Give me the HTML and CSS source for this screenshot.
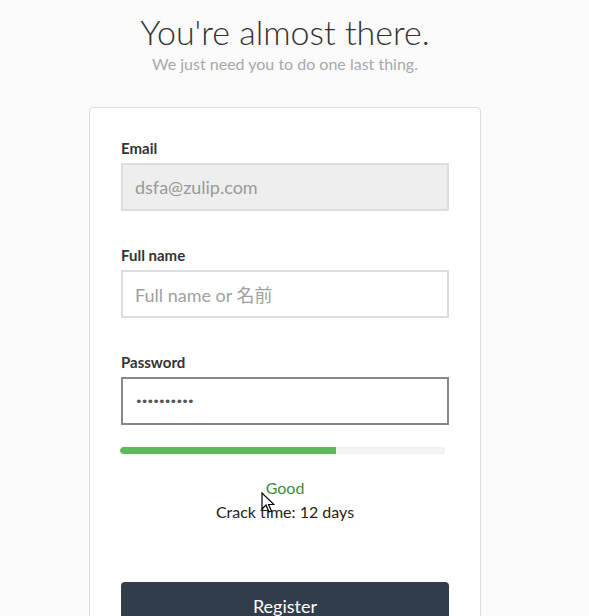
FILE: index.html
```html
<!DOCTYPE html>
<html lang="en">
<head>
<meta charset="utf-8">
<title>Register</title>
<link rel="stylesheet" href="styles.css">
</head>
<body>
<div class="page">
  <header class="intro">
    <h1 class="title">You're almost there.</h1>
    <p class="subtitle">We just need you to do one last thing.</p>
  </header>
  <form class="card">
    <div class="field">
      <label class="label">Email</label>
      <div class="input input-disabled">dsfa@zulip.com</div>
    </div>
    <div class="field">
      <label class="label">Full name</label>
      <div class="input input-placeholder">Full name or 名前</div>
    </div>
    <div class="field">
      <label class="label">Password</label>
      <div class="input input-focus"><span class="dots">••••••••••</span></div>
    </div>
    <div class="meter"><div class="meter-fill" style="width:66.5%"></div></div>
    <div class="strength">
      <div class="strength-word">Good</div>
      <div class="crack">Crack time: 12 days</div>
      <svg class="cursor" width="14" height="22" viewBox="0 0 14 22"><path d="M1 1 L1 17 L5 13 L8 20 L10.5 19 L7.5 12.5 L13 12.5 Z" fill="#fff" stroke="#000" stroke-width="1.2" stroke-linejoin="miter"/></svg>
    </div>
    <button type="button" class="btn">Register</button>
  </form>
</div>
</body>
</html>
```
FILE: styles.css
```css
html, body {
  margin: 0;
  padding: 0;
}
body {
  background-color: #fbfbfb;
  background-image: radial-gradient(rgba(0,0,0,0.012) 1px, transparent 1px);
  background-size: 3px 3px;
  font-family: "Source Sans Pro", Lato, "Noto Sans", sans-serif;
  color: #333;
  height: 616px;
  overflow: hidden;
}
.page {
  width: 392px;
  margin-left: 89px;
  display: flex;
  flex-direction: column;
}
.intro {
  text-align: center;
  padding-top: 10px;
}
.title {
  margin: 0;
  font-weight: 300;
  font-size: 34px;
  line-height: 44px;
  color: #333;
}
.subtitle {
  margin: 0;
  font-size: 16px;
  line-height: 20px;
  color: #a8a8a8;
}
.card {
  margin-top: 33px;
  background: #fff;
  border: 1px solid #ddd;
  border-radius: 4px;
  padding: 30px 31px 0 31px;
  display: flex;
  flex-direction: column;
  height: 520px;
  box-sizing: border-box;
}
.field {
  display: flex;
  flex-direction: column;
  margin-bottom: 34px;
}
.label {
  font-weight: 700;
  font-size: 15px;
  line-height: 20px;
  color: #333;
  margin-bottom: 5px;
}
.input {
  box-sizing: border-box;
  height: 48px;
  border: 2px solid #ddd;
  padding: 0 12px;
  display: flex;
  align-items: center;
  font-size: 18px;
  color: #999;
  background: #fff;
}
.input-disabled {
  background: #eee;
}
.input-placeholder {
  color: #a0a0a0;
  font-family: "Source Sans Pro", Lato, "Noto Sans CJK JP", sans-serif;
}
.input-focus {
  border-color: #888;
  color: #555;
}
.dots {
  font-family: "DejaVu Sans", sans-serif;
  font-size: 13px;
  letter-spacing: -1.9px;
  color: #555;
}
.meter {
  margin-top: -12px;
  width: 325px;
  margin-left: -1px;
  height: 8px;
  border-radius: 4px;
  background: #f4f4f4;
  box-shadow: inset 0 0 0 1px #eee;
  overflow: hidden;
}
.meter-fill {
  height: 100%;
  background: #5cb85c;
  border-radius: 4px 0 0 4px;
}
.strength {
  position: relative;
  text-align: center;
  margin-top: 22px;
  font-size: 16px;
  line-height: 24px;
}
.strength-word {
  color: #3d8b3d;
}
.crack {
  color: #222;
}
.cursor {
  position: absolute;
  left: 140px;
  top: 16px;
}
.btn {
  margin-top: 58px;
  height: 48px;
  border: none;
  border-radius: 4px;
  background: #323d4c;
  color: #fff;
  font-family: inherit;
  font-size: 18px;
  padding: 0;
  display: flex;
  justify-content: center;
  align-items: flex-start;
  padding-top: 13px;
  box-sizing: border-box;
}
```
